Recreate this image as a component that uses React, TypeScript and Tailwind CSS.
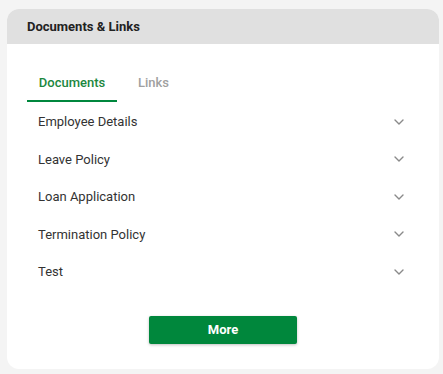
import React from "react";

const items = ["Employee Details", "Leave Policy", "Loan Application", "Termination Policy", "Test"];

function Chevron() {
  return (
    <svg width="10" height="6" viewBox="0 0 10 6" fill="none">
      <path d="M1 1l4 4 4-4" stroke="#8a8a8a" strokeWidth="1.4" strokeLinecap="round" strokeLinejoin="round" />
    </svg>
  );
}

export default function App() {
  return (
    <div className="w-[443px] h-[374px] bg-[#f4f4f4] pt-[9px] pl-[7px]" style={{ fontFamily: "Roboto, 'Liberation Sans', sans-serif" }}>
      <div className="w-[432px] h-[360px] bg-white rounded-[12px] overflow-hidden flex flex-col">
        <div className="h-[35px] bg-[#e0e0e0] flex items-center px-[20px]">
          <span className="text-[13px] font-bold text-[#222]">Documents &amp; Links</span>
        </div>
        <div className="px-[20px] pt-[20px] flex flex-col">
          <div className="flex h-[38px]">
            <div className="w-[90px] flex items-center justify-center border-b-2 border-[#00873d] text-[13px] font-medium text-[#1b873e] pt-[2px]">
              Documents
            </div>
            <div className="ml-[9px] px-[12px] flex items-center text-[13px] font-medium text-[#a0a0a0]">
              Links
            </div>
          </div>
          <div className="flex flex-col pt-[1px]">
            {items.map((t) => (
              <div key={t} className="h-[37.5px] flex items-center justify-between pl-[11px] pr-[15px]">
                <span className="text-[13px] text-[#333]">{t}</span>
                <Chevron />
              </div>
            ))}
          </div>
          <div className="flex justify-center mt-[25px]">
            <button className="w-[148px] h-[28px] bg-[#00873c] rounded-[2px] shadow-[0_1px_3px_rgba(0,0,0,0.25)] text-white text-[13px] font-bold">
              More
            </button>
          </div>
        </div>
      </div>
    </div>
  );
}
